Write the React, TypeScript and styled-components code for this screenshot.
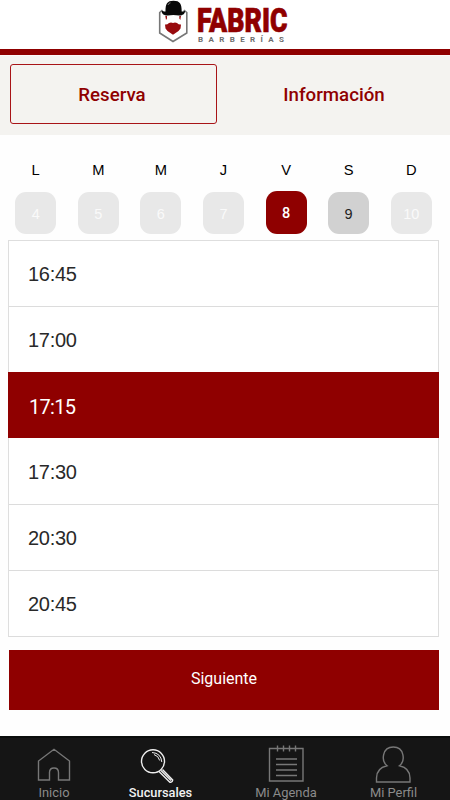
import React from "react";
import styled, { createGlobalStyle } from "styled-components";

const GlobalStyle = createGlobalStyle`
  *, *::before, *::after { box-sizing: border-box; }
  body { margin: 0; background: #fff; }
  button { font: inherit; padding: 0; border: 0; background: none; cursor: pointer; }
`;

const RED = "#8f0000";

const Screen = styled.div`
  width: 450px;
  height: 800px;
  display: flex;
  flex-direction: column;
  background: #fefefe;
  font-family: Roboto, sans-serif;
`;

const Header = styled.header`
  height: 55px;
  flex: none;
  padding-left: 155px;
  border-bottom: 6px solid ${RED};
  background: #fff;
  svg { display: block; overflow: visible; }
`;

const Tabs = styled.nav`
  flex: none;
  height: 80px;
  display: flex;
  gap: 14px;
  padding: 8px 13px 11px 10px;
  background: #f4f3f0;
  border-top: 1px solid #fbf8f7;
`;

const Tab = styled.button<{ $active?: boolean }>`
  width: ${(p) => (p.$active ? 207 : 206)}px;
  height: 60px;
  padding-top: 1px;
  padding-right: ${(p) => (p.$active ? 3 : 0)}px;
  border: 1px solid ${(p) => (p.$active ? "#a81417" : "transparent")};
  border-radius: 3px;
  color: ${RED};
  font-size: 18.7px;
  font-weight: 500;
  line-height: 58px;
`;

const Week = styled.section`
  flex: none;
  height: 105px;
  display: grid;
  grid-template-columns: repeat(7, 62.6px);
  padding: 24px 0 0 4.4px;
  font-family: "Liberation Sans", Arial, sans-serif;
`;

const Day = styled.div`
  display: flex;
  flex-direction: column;
  align-items: center;
`;

const Letter = styled.span`
  height: 21px;
  line-height: 23px;
  font-size: 14.7px;
  color: #000;
`;

type DayState = "off" | "on" | "picked";
const dayBack = { off: "#e8e8e8", on: "#d1d1d1", picked: RED };
const dayInk = { off: "#fafafa", on: "#222", picked: "#fff" };

const DayTile = styled.button<{ $state: DayState }>`
  width: 41px;
  height: ${(p) => (p.$state === "picked" ? 43 : 42)}px;
  margin-top: ${(p) => (p.$state === "picked" ? 11 : 12)}px;
  padding-top: 1px;
  border-radius: 11px;
  background: ${(p) => dayBack[p.$state]};
  color: ${(p) => dayInk[p.$state]};
  font-family: ${(p) => (p.$state === "picked" ? "Roboto" : '"Liberation Sans"')}, sans-serif;
  font-weight: ${(p) => (p.$state === "picked" ? 500 : 400)};
  font-size: 14.5px;
`;

const Slots = styled.ul`
  flex: none;
  list-style: none;
  width: 431px;
  height: 397px;
  margin: 0 0 0 8px;
  padding: 0;
  border: 1px solid #dedede;
  border-bottom: 0;
  background: #fff;
`;

const Slot = styled.li<{ $picked?: boolean }>`
  height: 66px;
  margin: ${(p) => (p.$picked ? "-1px -1px 1px" : "0")};
  padding: ${(p) => (p.$picked ? "3px 0 0 21px" : "1px 0 0 19px")};
  border-bottom: ${(p) => (p.$picked ? "0" : "1px solid #dcdcdc")};
  background: ${(p) => (p.$picked ? RED : "#fff")};
  color: ${(p) => (p.$picked ? "#fff" : "#292929")};
  font-family: ${(p) => (p.$picked ? "Roboto" : '"Liberation Sans"')}, sans-serif;
  font-size: 20px;
  letter-spacing: ${(p) => (p.$picked ? -0.7 : -0.3)}px;
  line-height: 64px;
`;

const Next = styled.button`
  flex: none;
  width: 430px;
  height: 60px;
  margin: 13px 0 0 9px;
  padding-bottom: 4px;
  background: ${RED};
  color: #fff;
  font-size: 16px;
`;

const BottomBar = styled.nav`
  margin-top: auto;
  flex: none;
  height: 64px;
  display: grid;
  grid-template-columns: 108px 105px 146px 69px;
  background: #151515;
  border-top: 2px solid #0b0e0c;
`;

const NavItem = styled.button<{ $active?: boolean }>`
  display: flex;
  flex-direction: column;
  align-items: center;
  padding-top: 6px;
  color: ${(p) => (p.$active ? "#f2f2f2" : "#8b8b8b")};
  font-size: ${(p) => (p.$active ? 12.8 : 12.9)}px;
  font-weight: ${(p) => (p.$active ? 500 : 400)};
  line-height: 16px;
  white-space: nowrap;
  svg {
    display: block;
    flex: none;
    margin-left: ${(p) => (p.$active ? -8 : -1)}px;
    fill: none;
    stroke: ${(p) => (p.$active ? "#eee" : "#777")};
    stroke-width: 1.4;
  }
`;

const NavText = styled.span`
  margin-top: 1px;
`;

const Logo = () => (
  <svg width="140" height="49" viewBox="155 0 140 49" role="img" aria-label="Fabric Barberías">
    <path d="M162.500 10L159.700 12.500V33L173 41.500L186.800 33V12.500L183.800 10" fill="none" stroke="#777" strokeWidth="1.600" />
    <path d="M165.500 11.500C165.500 4 167 .8 173.500 .8C180 .8 181.700 4 181.700 11.500C184 11.500 185 10.500 185 11.500C185 14 182 15.800 179 15.500C175.500 14.800 171 14.800 168 15.500C164.500 15.800 161.700 14 161.700 11.500C161.700 10.500 163 11.500 165.500 11.500Z" fill="#090909" />
    <path d="M168 5Q168.800 2.800 170.500 2.800" fill="none" stroke="#777" strokeWidth="1" />
    <path d="M165.300 16H167V18.500L166 20Z M179.300 16H181L180.300 20L179.300 18.500Z" fill="#9b1114" />
    <path d="M165 24.500Q167 25 169 23Q171 21.800 173 23Q175 21.800 177 23Q179 25 181 24.500L180.500 28.500L178.500 31L173 34.700L167.500 31L165.500 28.500Z" fill="#980b0e" />
    <text x="197" y="32.400" textLength="90.500" lengthAdjust="spacingAndGlyphs" fontFamily="Roboto, sans-serif" fontWeight="900" fontSize="33" fill={RED} stroke={RED} strokeWidth=".7">FABRIC</text>
    <text x="198" y="42.200" textLength="86" lengthAdjust="spacing" fontFamily="Roboto, sans-serif" fontWeight="700" fontSize="8" fill="#6d6d6d">BARBERÍAS</text>
  </svg>
);

const HomeIcon = () => (
  <svg width="36" height="40" viewBox="36 744 36 40">
    <path d="M38.500 780V761L54 749.300L69.500 761V780H58.500V772.500Q58.500 768 54 768Q49.500 768 49.500 772.500V780Z" />
  </svg>
);

const SearchIcon = () => (
  <svg width="36" height="40" viewBox="139 744 36 40">
    <circle cx="153" cy="761.300" r="11.500" />
    <path d="M152 752.500Q161 753 161.800 762M154 754.500Q158.700 756 159.700 760.500" strokeWidth="1" />
    <path d="M159 771.500L169.500 782Q172 783 172.700 780L162.500 769.500M161 770.500L171 780.500" />
  </svg>
);

const AgendaIcon = () => (
  <svg width="38" height="40" viewBox="267 744 38 40">
    <path d="M269.500 748.500H303V781H269.500Z" />
    <path d="M277.500 745.500V751.500M283.500 745.500V751.500M289.500 745.500V751.500M295.500 745.500V751.500" />
    <path d="M276 759H297M276 764.500H297M276 770H297M276 775.500H297" strokeWidth="1.700" />
  </svg>
);

const ProfileIcon = () => (
  <svg width="38" height="40" viewBox="374 744 38 40">
    <path d="M376.500 782V778Q376.500 768 387 765.700C381 761 382 747 393.300 747C404.500 747 405.500 761 399.500 765.700Q410 768 410 778V782Z" />
  </svg>
);

const days: { letter: string; date: number; state: DayState }[] = [
  { letter: "L", date: 4, state: "off" },
  { letter: "M", date: 5, state: "off" },
  { letter: "M", date: 6, state: "off" },
  { letter: "J", date: 7, state: "off" },
  { letter: "V", date: 8, state: "picked" },
  { letter: "S", date: 9, state: "on" },
  { letter: "D", date: 10, state: "off" },
];

const times = ["16:45", "17:00", "17:15", "17:30", "20:30", "20:45"];

export default function App() {
  return (
    <Screen>
      <GlobalStyle />
      <Header><Logo /></Header>
      <Tabs>
        <Tab $active>Reserva</Tab>
        <Tab>Información</Tab>
      </Tabs>
      <Week>
        {days.map((d) => (
          <Day key={d.date}>
            <Letter>{d.letter}</Letter>
            <DayTile $state={d.state}>{d.date}</DayTile>
          </Day>
        ))}
      </Week>
      <Slots>
        {times.map((t) => (
          <Slot key={t} $picked={t === "17:15"}>{t}</Slot>
        ))}
      </Slots>
      <Next>Siguiente</Next>
      <BottomBar>
        <NavItem><HomeIcon /><NavText>Inicio</NavText></NavItem>
        <NavItem $active><SearchIcon /><NavText>Sucursales</NavText></NavItem>
        <NavItem><AgendaIcon /><NavText>Mi Agenda</NavText></NavItem>
        <NavItem><ProfileIcon /><NavText>Mi Perfil</NavText></NavItem>
      </BottomBar>
    </Screen>
  );
}
